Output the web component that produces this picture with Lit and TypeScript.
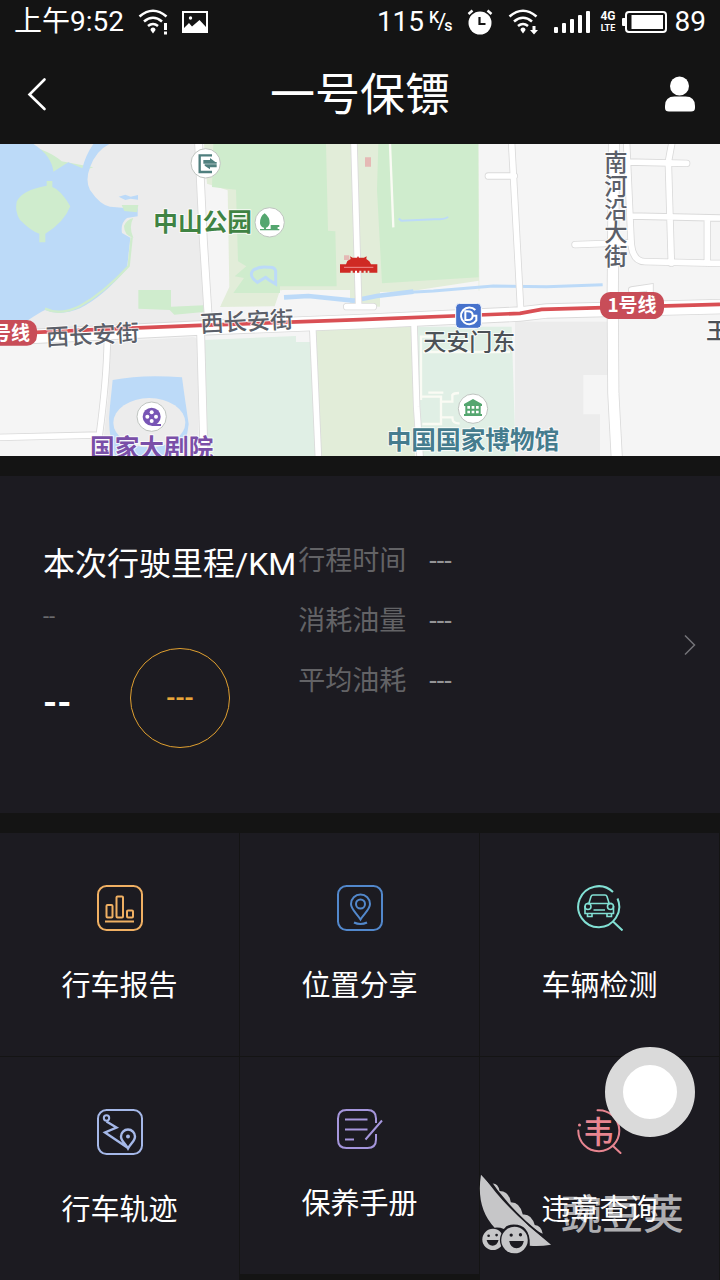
import { LitElement, html, svg, css } from "lit";
import { customElement } from "lit/decorators.js";

const fonts = css`Roboto, "Noto Sans CJK SC", sans-serif`;

const icons = {
  report: svg`<svg width="46" height="46" viewBox="0 0 46 46" fill="none" stroke="#f0b063" stroke-width="2">
    <rect x="1" y="1" width="44" height="44" rx="8.5"/>
    <rect x="9.5" y="20" width="6" height="12.5" rx="1"/>
    <rect x="19.5" y="11.500" width="6.500" height="21" rx="1"/>
    <rect x="30" y="25.500" width="6" height="7" rx="1"/>
    <path d="M8 36.500h29"/></svg>`,
  pin: svg`<svg width="46" height="46" viewBox="0 0 46 46" fill="none" stroke="#5288cc" stroke-width="2">
    <rect x="1" y="1" width="44" height="44" rx="8.5"/>
    <path d="M23.500 34.500C20 28.500 14 24.500 14 19a9.500 9.500 0 0 1 19 0C33 24.500 27 28.500 23.500 34.500z"/>
    <circle cx="23.500" cy="19" r="4.500"/>
    <path d="M17 37.500q6.500 3 13 0" stroke-width="2.200"/></svg>`,
  check: svg`<svg width="46" height="46" viewBox="0 0 46 46" fill="none" stroke="#82e0d4" stroke-width="2">
    <path d="M36 7A20.500 20.500 0 1 0 40.500 13.500M36 36.500l9.500 9"/>
    <g stroke-width="1.600"><path d="M11.500 19.500 14 11.500q.500-1.500 2-1.500h12q1.500 0 2 1.500l2.500 8M10 18.500h25M8 21v7.500h28.500V21"/>
    <circle cx="11" cy="21.500" r="3"/><circle cx="33.500" cy="21.500" r="3"/>
    <path d="M16.500 25h11.500M10.500 29v2.500h4.500V29M30 29v2.500h4.500V29"/></g></svg>`,
  track: svg`<svg width="46" height="46" viewBox="0 0 46 46" fill="none" stroke="#a5b8e8" stroke-width="2">
    <rect x="1" y="1" width="44" height="44" rx="8.5"/>
    <circle cx="9.500" cy="9" r="2.700"/>
    <path d="M9.500 12.500 19.500 18.500 8 23.500 31 39M31 39.500C28 34 24 32 24 27.500a7 7 0 0 1 14 0C38 32 34 34 31 39.500z" stroke-width="2.400"/>
    <circle cx="31" cy="27.500" r="2" fill="#a5b8e8" stroke="none"/></svg>`,
  book: svg`<svg width="46" height="40" viewBox="0 0 46 40" fill="none" stroke="#a596dc" stroke-width="2">
    <path d="M39 14V9.500Q39 1 30.500 1H9.500Q1 1 1 9.500v21Q1 39 9.500 39h21Q39 39 39 30.500V25"/>
    <path d="M8 10.500h22.500M8 20.500h22.500M8 30.500h9M28.500 30.500 45 11.500"/></svg>`,
  violation: svg`<svg width="46" height="46" viewBox="0 0 46 46" fill="none" stroke="#e88590" stroke-width="2">
    <path d="M20.500 1.200A20.500 20.500 0 1 1 1.300 21.500M36 37l7.500 7" stroke-linecap="round"/>
    <circle cx="2.500" cy="16" r="1.500" fill="#e88590" stroke="none"/>
    <text x="21.500" y="33.500" font-size="31" font-weight="500" text-anchor="middle" fill="#e88590" stroke="none">韦</text></svg>`,
};

const entries = [
  { icon: icons.report, label: "行车报告" },
  { icon: icons.pin, label: "位置分享" },
  { icon: icons.check, label: "车辆检测" },
  { icon: icons.track, label: "行车轨迹" },
  { icon: icons.book, label: "保养手册" },
  { icon: icons.violation, label: "违章查询" },
];

const trip = [
  ["行程时间", "---"],
  ["消耗油量", "---"],
  ["平均油耗", "---"],
];

const wifiArcs = svg`<path d="M1.500 7.500Q15-4 28.500 7.500M6 12.500Q15 5 24 12.500M10 17Q15 13 20 17" fill="none" stroke="#fff" stroke-width="2.600"/><path d="M12.500 21a2.500 2.500 0 0 1 5 0L15 24.500z"/>`;

@customElement("status-bar")
class StatusBar extends LitElement {
  static styles = css`
    :host { display: flex; justify-content: space-between; height: 44px; padding: 0 14px; align-items: center;
      color: #fff; font: 28px/46px ${fonts}; }
    .side { display: flex; align-items: center; }
    .left { gap: 14px; }
    svg { display: block; fill: #fff; }
    .rate { font-size: 16px; line-height: 16px; font-weight: 500; margin: 0 14px 0 5px; display: flex; }
    .rate .slash { font-size: 22px; line-height: 24px; font-weight: 400; margin: 0 -2px; }
    .rate .per { align-self: flex-end; }
    .wifi { margin: 0 16px 0 15px; }
    .net { font-size: 12px; line-height: 13px; font-weight: 700; margin: 0 5px 0 9px; text-align: center; width: 17px; }
    .net small { display: block; font-size: 9px; line-height: 11px; }
    .level { margin-left: 8px; }
  `;
  render() {
    return html`
      <div class="side left">
        <span>上午9:52</span>
        <svg width="30" height="26" viewBox="0 0 30 26">${wifiArcs}<path d="M25 13h5v13h-5z" fill="#141414"/><path d="M26 14h3v7h-3zM26 22.500h3v3h-3z"/></svg>
        <svg width="26" height="22" viewBox="0 0 26 22"><path fill-rule="evenodd" d="M0 0h26v22H0zM2 2v15l5-5 3 3.500L17.500 9 24 16V2z"/><circle cx="8.500" cy="7" r="1.700"/></svg>
      </div>
      <div class="side">
        <span>115</span>
        <span class="rate"><span>K</span><span class="slash">/</span><span class="per">s</span></span>
        <svg width="26" height="26" viewBox="0 0 26 26"><path d="M1.500 5 5.500 1.500M20.500 1.500l4 3.500" stroke="#fff" stroke-width="2.500"/><circle cx="13" cy="14" r="11.500"/><path d="M12.500 8v7h6" fill="none" stroke="#141414" stroke-width="2.200"/></svg>
        <svg class="wifi" width="30" height="26" viewBox="0 0 30 26">${wifiArcs}<path d="M22 14h8v12h-8z" fill="#141414"/><path d="M24.500 17h3v4h2.500l-4 4.500-4-4.500h2.500z"/></svg>
        <svg width="37" height="24" viewBox="0 0 37 24"><rect y="17" width="4" height="6" rx="1"/><rect x="8" y="13" width="4" height="10" rx="1"/><rect x="16" y="9" width="4" height="14" rx="1"/><rect x="24" y="5" width="4" height="18" rx="1"/><rect x="32" y="1" width="4" height="22" rx="1"/></svg>
        <span class="net">4G<small>LTE</small></span>
        <svg width="45" height="24" viewBox="0 0 45 24"><rect y="8" width="4" height="8" rx="1"/><rect x="4" y="2" width="40" height="20" rx="3" fill="none" stroke="#fff" stroke-width="2"/><rect x="9.500" y="5" width="31.500" height="14"/></svg>
        <span class="level">89</span>
      </div>`;
  }
}

@customElement("city-map")
class CityMap extends LitElement {
  static styles = css`
    :host { display: block; height: 312px; background: #f5f5f5; }
    svg { display: block; width: 100%; height: 100%; font-family: "Noto Sans CJK SC", sans-serif; font-weight: 500; }
    .label { stroke: #fff; stroke-opacity: .75; stroke-width: 6; paint-order: stroke; stroke-linejoin: round; }
    .road { font-size: 70px; fill: #5b5f69; }
    .down { writing-mode: vertical-rl; }
    .station { font-size: 69px; fill: #4c5157; }
    .poi { font-size: 74px; font-weight: 700; }
    .park { fill: #3f8343; }
    .arts { fill: #7a4fa8; }
    .museum { fill: #457c8e; }
    .line { font-size: 57px; font-weight: 700; fill: #fff; }
  `;
  render() {
    const minor = svg`
      <path d="M322 600Q320 720 298 885L0 892M1062 12 1076 500M1040 500h80M1535 12 1542 140 1562 510M1465 108h78M1880 66 2060 70M2015 12 2005 66 2014 370M1880 12 1893 300Q1895 365 1935 365L2160 370M1892 228 2160 234M2122 234V370M1725 314 1890 308M1895 450 1950 442V470"/>
      <path d="M938 560 955 948M1242 548 1250 800 1260 948"/>`;
    return html`<svg viewBox="0 12 2160 936" preserveAspectRatio="xMidYMid slice" role="img" aria-label="地图">
      <path fill="#f5f5f5" d="M0 0h2160v960H0z"/>
      <path fill="#ececec" d="M0 0h590l30 560L0 590zM325 605l255-14q15 0 15 30v330H305l20-190zM1545 545h280v160h-75v118h50v130h-255z"/>
      <path fill="#cfeccd" d="M70 12q80 20 115 52l95 18-60 20-65 5zM415 450h98v50l98-4v20l-88 8-14-14-94-4z"/>
      <path fill="#bcdaf8" d="M0 0h80q75 40 80 95l45-28 42 18q10-40 33-73h48q-40 20-58 70-15 40 0 68 30 45 60 50l55 5 28 0v24l-32 5q-20 15-15 45l25 14-10 92Q310 470 240 505q-60 25-105 5-20 10-50 30H0z"/>
      <path fill="none" stroke="#cfeccd" stroke-width="7" d="M395 292 386 378Q310 460 240 498q-60 30-105 8"/>
      <path fill="#cfeccd" d="M50 185Q65 150 140 137v-14h17v18q25 8 54 58-20 50-75 82v26h-18v-26Q95 275 60 240 44 215 50 185zM365 195h50l-4 22-38-4zM372 258q8-20 28-24-15 25 0 60-28-8-28-36z"/>
      <path fill="#bcdaf8" d="m356 170 20-6 16 6 22-5v14l-22-3-16 4z"/>
      <path fill="#e2edd9" d="M612 12h823l3 440-360 5-238-6-16 48-164 2 28-60-5-290-62-20z"/>
      <path fill="#cfeccd" d="M640 12h338l6 260 22 2 4 165H840v20H700l32-45-28-5 35-30-25-15-6-215-72-8zM1135 12h300l1 400-290 18-15-280z"/>
      <path fill="#f5f5f5" d="M622 280h62v150l-24 70h-30zM846 450h230v20l100-8 260-40v90L840 535z"/>
      <path fill="#e2edd9" d="M1050 440h90v60h-90z"/>
      <path fill="none" stroke="#bcdaf8" stroke-width="9" d="M760 390q20-12 45-8 20-2 22 12v38l-20-12-10-8-25 15q-28-20-12-37z"/>
      <path fill="none" stroke="#bcdaf8" stroke-width="14" d="M852 472 925 468 1060 482 1130 468 1240 455"/>
      <path fill="none" stroke="#bcdaf8" stroke-width="9" d="M1230 457 1300 453 1480 438 1640 440 1808 434"/>
      <path fill="none" stroke="#bcdaf8" stroke-width="6" d="m1196 236 8 6 100-4q35 0 40-8"/>
      <path fill="#e0efe5" d="M612 600 888 588v18h42l24 342H612zM1250 560h285l12 388h-280z"/>
      <path fill="#e2edd9" d="M945 565 1235 556 1245 948H960z"/>
      <path fill="#bcdaf8" d="M338 720q90-18 208-8 8 60 20 140-5 45-20 80l-70 16H345q-25-80-15-150z"/>
      <ellipse cx="448" cy="848" rx="108" ry="74" fill="#ececec"/>
      <path fill="none" stroke="#fafbf4" stroke-width="7" d="M1263 780V590h45M1265 770h58v82h-56M1285 758h45M1325 785h32v-20q5-6 20-6M1325 832h32q0 20 22 18M1170 12l10 250M1270 636h260"/>
      <g fill="none" stroke="#dadada" stroke-linecap="round">
        <g stroke-width="22">${minor}</g>
        <path stroke-width="26" d="M596 12 610 300 624 520M602 580 612 948"/>
        <path stroke-width="36" d="M1842 12 1838 480 1840 760 1850 948"/>
        <path stroke-width="46" d="M0 594 600 564 1080 545 1560 522 1640 513 2160 500"/>
      </g>
      <g fill="none" stroke="#fff" stroke-linecap="round">
        <g stroke-width="17">${minor}</g>
        <path stroke-width="21" d="M596 12 610 300 624 520M602 580 612 948"/>
        <path stroke-width="31" d="M1842 12 1838 480 1840 760 1850 948"/>
        <path stroke-width="41" d="M0 594 600 564 1080 545 1560 522 1640 513 2160 500"/>
      </g>
      <path d="M90 578 300 568 600 556 1080 539 1560 520 1625 508 2160 493" fill="none" stroke="#d94f54" stroke-width="11"/>
      <path d="M1032 346h16v14h-16zM1095 52h18v28h-18z" fill="#e5b9b5"/>
      <path d="M1020 373h18l4-10 10-6-2-8 8 4h13l3-5 3 5h15l8-4-1 8 9 7 5 9h19v25h-24v-6h-5v6h-6v-6h-6v6h-7v-6h-6v6h-7v-6h-6v6h-7v-6h-6v6h-32z" fill="#cf2a24"/>
      <path d="M1032 382h88" stroke="#ef8f8f" stroke-width="3"/>
      <g fill="#fff" stroke="#bfc4c0" stroke-width="3"><circle cx="617" cy="70" r="44"/><circle cx="809" cy="247" r="44"/><circle cx="455" cy="830" r="44"/><circle cx="1419" cy="806" r="44"/></g>
      <path d="M636 46h-37v50h37" fill="none" stroke="#4f7f7e" stroke-width="7"/>
      <path d="M610 60h20v-6l16 12h4v5h-40zM650 82h-20v6l-16-11v-4h36z" fill="#4f7f7e"/>
      <path d="M794 220q16 12 15 30-3 12-11 13v4h14v-12h26v6h-5v6h5v4h-58v-4h12v-4q-10-1-12-13-1-20 14-30z" fill="#54a66f"/>
      <circle cx="455" cy="830" r="27" fill="#7855b5"/><path d="M455 852h28v6h-28z" fill="#7855b5"/>
      <g fill="#fff"><circle cx="455" cy="817" r="6"/><circle cx="455" cy="843" r="6"/><circle cx="442" cy="830" r="6"/><circle cx="468" cy="830" r="6"/></g>
      <path d="m1392 792 27-15 27 15v6h-4v24h4v6h-54v-6h4v-24h-4z" fill="#54a66f"/>
      <path d="M1402 798h8v8h-8zM1415 798h8v8h-8zM1428 798h8v8h-8zM1402 812h8v8h-8zM1415 812h8v8h-8zM1428 812h8v8h-8z" fill="#fff"/>
      <rect x="1367" y="490" width="77" height="75" rx="12" fill="#4672cc" stroke="#fff" stroke-width="3"/>
      <g fill="none" stroke="#fff" stroke-width="6"><path d="M1426 510A25 25 0 1 0 1429 541V527h-12"/><path d="M1396 514h7q15 0 15 13t-15 13h-7z"/></g>
      <rect x="1800" y="456" width="192" height="81" rx="32" fill="#c84d58"/>
      <rect x="-60" y="540" width="171" height="77" rx="30" fill="#c84d58"/>
      <text class="line" x="1896" y="517" text-anchor="middle">1号线</text>
      <text class="line" x="90" y="599" text-anchor="end">1号线</text>
      <text class="label road" x="139" y="617" transform="rotate(-3 139 617)">西长安街</text>
      <text class="label road" x="602" y="577" transform="rotate(-3 602 577)">西长安街</text>
      <text class="label road down" x="1848" y="32">南河沿大街</text>
      <text class="label station" x="1270" y="630">天安门东</text>
      <text class="label station" x="2118" y="597">王府井</text>
      <text class="label poi park" x="460" y="272">中山公园</text>
      <text class="label poi arts" x="270" y="951">国家大剧院</text>
      <text class="label poi museum" x="1160" y="926">中国国家博物馆</text>
    </svg>`;
  }
}

@customElement("app-root")
class AppRoot extends LitElement {
  static styles = css`
    :host { display: block; position: relative; overflow: hidden; background: #141414; color: #fff; font-family: ${fonts}; }
    button { margin: 0; border: 0; padding: 0; background: none; color: inherit; font: inherit; cursor: pointer; }
    svg { display: block; }
    .bar { display: flex; align-items: center; justify-content: space-between; height: 100px; padding: 0 25px; box-sizing: border-box; }
    h1 { margin: 0; padding-top: 4px; font-size: 45px; line-height: 60px; font-weight: 400; }
    .trip { display: flex; align-items: center; margin: 20px 0; padding: 65px 24px 65px 43px; background: #1c1b21; }
    .summary { display: flex; flex: 1; align-items: flex-start; gap: 2px; }
    h2 { margin: 0; font-size: 32px; line-height: 46px; font-weight: 400; white-space: nowrap; }
    .date { margin: 15px 0 16px; font-size: 22px; line-height: 30px; color: #6b6b6e; }
    .score { display: flex; align-items: center; }
    .distance { width: 87px; padding-top: 10px; font-size: 36px; font-weight: 700; }
    .ring { display: grid; place-items: center; width: 100px; height: 100px; box-sizing: border-box; border: 1px solid #e0a030; border-radius: 50%; color: #e8a63a; font-size: 27px; font-weight: 500; }
    dl { display: grid; grid-template-columns: auto auto; gap: 20px 23px; margin: 0; font-size: 27px; line-height: 40px; }
    dt { color: #636366; }
    dd { margin: 0; color: #949496; }
    .menu { display: grid; grid-template-columns: repeat(3, 1fr); row-gap: 1px; align-items: start; }
    .entry { display: flex; flex-direction: column; align-items: center; gap: 36px; padding: 52px 0 51px; border-right: 1px solid #141414; background: #1c1b21; font-size: 29px; line-height: 38px; }
    .entry span { position: relative; z-index: 1; }
    .assist { position: absolute; right: 25px; bottom: 143px; width: 90px; height: 90px; border: 18px solid #dadada; border-radius: 50%; background: #fff; }
    .brand { position: absolute; right: 36px; bottom: 24px; display: flex; align-items: center; gap: 9px; color: #aeaeb1; pointer-events: none; font-size: 41px; line-height: 60px; font-weight: 500; }
  `;
  render() {
    return html`
      <status-bar></status-bar>
      <header class="bar">
        <button aria-label="返回"><svg width="30" height="40" viewBox="0 0 30 40" fill="none" stroke="#fff" stroke-width="2.600" stroke-linecap="round"><path d="M19.500 5.500 4.500 20.500 19.500 35"/></svg></button>
        <h1>一号保镖</h1>
        <button aria-label="我的"><svg width="30" height="36" viewBox="0 0 30 36" fill="#fff"><circle cx="14.500" cy="10" r="9.500"/><path d="M0 30q0-9.500 9.500-9.500h11Q30 20.500 30 30v2q0 3.500-4 3.500H4Q0 35.500 0 32z"/></svg></button>
      </header>
      <city-map></city-map>
      <section class="trip">
        <div class="summary">
          <div>
            <h2>本次行驶里程/KM</h2>
            <div class="date">--</div>
            <div class="score"><span class="distance">--</span><span class="ring">---</span></div>
          </div>
          <dl>${trip.map(([name, value]) => html`<dt>${name}</dt><dd>${value}</dd>`)}</dl>
        </div>
        <button aria-label="行程详情"><svg width="12" height="20" viewBox="0 0 12 20" fill="none" stroke="#737377" stroke-width="1.500"><path d="M1 .500 10.500 10 1 19.500"/></svg></button>
      </section>
      <nav class="menu">
        ${entries.map((e) => html`<button class="entry">${e.icon}<span>${e.label}</span></button>`)}
      </nav>
      <button class="assist" aria-label="悬浮球"></button>
      <div class="brand">
        <svg width="73" height="83" viewBox="55 425 220 250" fill="#c6c6c8">
          <path d="M61 430 205 585 272 641q-35 6-64 3 2-64-48-64-22 0-30 14-14-6-28-4Q45 530 61 430z"/>
          <path d="M94 457q18-2 23 22 28 0 34 34 28 0 36 37 26-3 36 32 20 2 24 26l-11-5Q160 550 94 457z"/>
          <circle cx="97" cy="625" r="32"/><circle cx="162" cy="627" r="44" fill="#1c1b21"/><circle cx="162" cy="627" r="40"/>
          <g fill="#1c1b21"><path d="M66 430 78 430Q150 540 260 622L272 637Q140 540 66 430z"/><circle cx="84" cy="614" r="4"/><circle cx="108" cy="612" r="4"/><path d="M78 627l36 0q-4 17-18 17t-18-17z"/>
          <circle cx="152" cy="612" r="5"/><circle cx="180" cy="611" r="5"/><path d="M146 630h44q-4 22-22 22t-22-22z"/></g>
        </svg>
        <span>豌豆荚</span>
      </div>`;
  }
}
